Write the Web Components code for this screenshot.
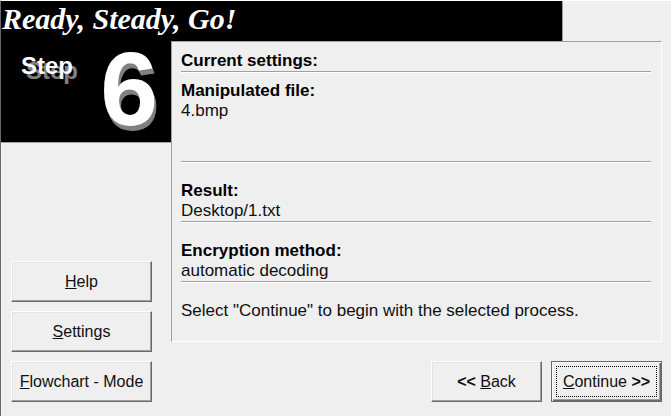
<!DOCTYPE html>
<html lang="en">
<head>
<meta charset="utf-8">
<title>Ready, Steady, Go!</title>
<style>
html, body { height: 100%; margin: 0; }
body { background: #efefef; color: #101010; font-family: "Liberation Sans", Arial, sans-serif; font-size: 16px; line-height: 20px; }
</style>
</head>
<body>
<wizard-page></wizard-page>
<script>
class BaseElement extends HTMLElement {
  constructor() {
    super();
    this.attachShadow({ mode: "open" }).innerHTML = this.render();
  }
}

customElements.define("title-banner", class extends BaseElement {
  render() {
    return `<style>
      :host { display: block; box-sizing: border-box; height: 40px; background: #000; color: #fff; margin-right: 108px; border-right: 1px solid #a0a0a0; }
      h1 { margin: 0; padding-left: 1px; font: italic bold 30px/36px "Liberation Serif", "Times New Roman", serif; white-space: nowrap; }
    </style><h1><slot></slot></h1>`;
  }
});

customElements.define("step-badge", class extends BaseElement {
  render() {
    return `<style>
      :host { display: flex; justify-content: space-between; height: 102px; padding: 0 13px 0 20px; background: #000; color: #fff; font-weight: bold; border-bottom: 1px solid #a0a0a0; box-sizing: border-box; }
      .label { font-size: 24px; line-height: 50px; text-shadow: 5px 5px #808080; }
      .number { font-size: 104px; line-height: 96px; text-shadow: 2px 5px #808080; }
    </style><span class="label"><slot></slot></span><span class="number"><slot name="number"></slot></span>`;
  }
});

customElements.define("push-button", class extends BaseElement {
  render() {
    return `<style>
      :host { display: block; }
      button { display: block; width: 100%; height: 41px; margin: 0; padding: 0; font: inherit; color: inherit; background: #efefef; border: 1px solid; border-color: #fff #696969 #696969 #fff; box-shadow: inset -1px -1px #a0a0a0, inset 1px 1px #e3e3e3; white-space: nowrap; }
      .face { display: block; }
      :host([default]) button { padding: 4px; border-color: #696969; box-shadow: inset 1px 1px #fff, inset -1px -1px #696969, inset -2px -2px #a0a0a0; }
      :host([default]) .face { line-height: 29px; border: 1px dotted #000; }
    </style><button type="button"><span class="face"><slot></slot></span></button>`;
  }
});

customElements.define("etched-rule", class extends BaseElement {
  render() {
    return `<style>
      :host { display: block; }
      hr { margin: 0; border: 0; border-top: 1px solid #a0a0a0; border-bottom: 1px solid #fff; }
    </style><hr>`;
  }
});

customElements.define("setting-entry", class extends BaseElement {
  render() {
    return `<style>
      :host { display: block; padding-top: 18px; }
      h2 { margin: 0; font-size: inherit; color: #000; }
      .value { min-height: var(--value-height, 20px); }
    </style><h2><slot name="name"></slot></h2><div class="value"><slot></slot></div><etched-rule></etched-rule>`;
  }
});

customElements.define("settings-panel", class extends BaseElement {
  render() {
    return `<style>
      :host { display: block; box-sizing: border-box; font-size: 17px; line-height: 20px; padding: 9px 10px 20px 9px; border: 1px solid; border-color: #a0a0a0 #fff #fff #a0a0a0; }
      h2 { margin: 0; font-size: inherit; color: #000; }
      .first { padding-top: 8px; --value-height: 60px; }
      p { margin: 18px 0 0; font-size: 17px; }
    </style>
    <h2>Current settings:</h2>
    <etched-rule></etched-rule>
    <setting-entry class="first"><span slot="name">Manipulated file:</span>4.bmp</setting-entry>
    <setting-entry><span slot="name">Result:</span>Desktop/1.txt</setting-entry>
    <setting-entry><span slot="name">Encryption method:</span>automatic decoding</setting-entry>
    <p>Select "Continue" to begin with the selected process.</p>`;
  }
});

customElements.define("wizard-page", class extends BaseElement {
  render() {
    return `<style>
      :host { display: block; min-height: 100%; box-sizing: border-box; border-top: 1px solid #fff; border-left: 1px solid #696969; }
      .body { display: grid; grid-template-columns: 170px 1fr; padding-right: 9px; }
      .side { display: flex; flex-direction: column; justify-content: space-between; }
      .tools { display: grid; gap: 9px; padding: 0 19px 0 10px; }
      .main { display: flex; flex-direction: column; gap: 19px; }
      nav { display: grid; grid-template-columns: 111px 111px; gap: 9px; justify-content: end; }
    </style>
    <title-banner>Ready, Steady, Go!</title-banner>
    <div class="body">
      <div class="side">
        <step-badge>Step<span slot="number">6</span></step-badge>
        <div class="tools">
          <push-button><u>H</u>elp</push-button>
          <push-button><u>S</u>ettings</push-button>
          <push-button><u>F</u>lowchart - Mode</push-button>
        </div>
      </div>
      <div class="main">
        <settings-panel></settings-panel>
        <nav>
          <push-button><b>&lt;&lt;</b> <u>B</u>ack</push-button>
          <push-button default><u>C</u>ontinue <b>&gt;&gt;</b></push-button>
        </nav>
      </div>
    </div>`;
  }
});
</script>
</body>
</html>
